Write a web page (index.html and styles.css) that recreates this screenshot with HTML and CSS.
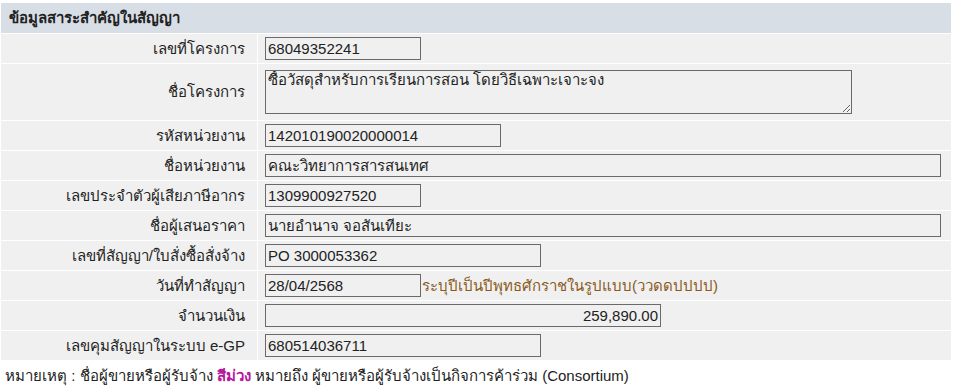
FILE: index.html
```html
<!DOCTYPE html>
<html lang="th">

<head>
    <meta charset="UTF-8">
    <meta name="viewport" content="width=device-width, initial-scale=1.0">
    <title>ข้อมูลสาระสำคัญในสัญญา</title>
    <link rel="stylesheet" href="styles.css">
</head>

<body>
    <div class="page">
        <table class="contract">
            <tr>
                <th class="section-head" colspan="2">ข้อมูลสาระสำคัญในสัญญา</th>
            </tr>
            <tr>
                <td class="label">เลขที่โครงการ</td>
                <td class="value"><input type="text" class="w-155" value="68049352241"></td>
            </tr>
            <tr class="tall">
                <td class="label">ชื่อโครงการ</td>
                <td class="value"><textarea rows="2">ซื้อวัสดุสำหรับการเรียนการสอน โดยวิธีเฉพาะเจาะจง</textarea></td>
            </tr>
            <tr>
                <td class="label">รหัสหน่วยงาน</td>
                <td class="value"><input type="text" class="w-235" value="142010190020000014"></td>
            </tr>
            <tr>
                <td class="label">ชื่อหน่วยงาน</td>
                <td class="value"><input type="text" class="w-full" value="คณะวิทยาการสารสนเทศ"></td>
            </tr>
            <tr>
                <td class="label">เลขประจำตัวผู้เสียภาษีอากร</td>
                <td class="value"><input type="text" class="w-155" value="1309900927520"></td>
            </tr>
            <tr>
                <td class="label">ชื่อผู้เสนอราคา</td>
                <td class="value"><input type="text" class="w-full" value="นายอำนาจ จอสันเทียะ"></td>
            </tr>
            <tr>
                <td class="label">เลขที่สัญญา/ใบสั่งซื้อสั่งจ้าง</td>
                <td class="value"><input type="text" class="w-275" value="PO 3000053362"></td>
            </tr>
            <tr>
                <td class="label">วันที่ทำสัญญา</td>
                <td class="value"><input type="text" class="w-155" value="28/04/2568"><span class="hint">ระบุปีเป็นปีพุทธศักราชในรูปแบบ(ววดดปปปป)</span></td>
            </tr>
            <tr>
                <td class="label">จำนวนเงิน</td>
                <td class="value"><input type="text" class="w-395 money" value="259,890.00"></td>
            </tr>
            <tr>
                <td class="label">เลขคุมสัญญาในระบบ e-GP</td>
                <td class="value"><input type="text" class="w-275" value="680514036711"></td>
            </tr>
        </table>

        <p class="note">หมายเหตุ : ชื่อผู้ขายหรือผู้รับจ้าง <b class="purple">สีม่วง</b> หมายถึง ผู้ขายหรือผู้รับจ้างเป็นกิจการค้าร่วม (Consortium)</p>
    </div>
</body>

</html>
```

FILE: styles.css
```css
* {
    box-sizing: border-box;
}

body {
    margin: 0;
    font-family: Tahoma, "Liberation Sans", "Noto Sans", sans-serif;
    font-size: 15px;
    color: #222;
    background-color: #fff;
}

.page {
    padding-top: 2px;
}

.contract {
    width: 952px;
    border-collapse: separate;
    border-spacing: 1px;
}

.section-head {
    height: 30px;
    padding: 0 8px;
    background-color: #d7dee6;
    text-align: left;
    font-weight: bold;
    color: #222;
}

.contract td {
    height: 29px;
    padding: 0;
    background-color: #f0f0f0;
    vertical-align: middle;
}

.contract tr.tall td {
    height: 56px;
}

.label {
    width: 256px;
    padding-right: 12px !important;
    text-align: right;
}

.value {
    padding-left: 7px !important;
    white-space: nowrap;
}

input,
textarea {
    font-family: inherit;
    font-size: 15px;
    color: #222;
    background-color: #f0f0f0;
    border: 1px solid #6a6a6a;
    border-radius: 0;
    margin: 0;
    vertical-align: middle;
}

input {
    height: 23px;
    padding: 0 2px;
}

textarea {
    display: block;
    width: 587px;
    height: 44px;
    padding: 0 2px;
    line-height: 18px;
}

.w-155 {
    width: 156px;
}

.w-235 {
    width: 236px;
}

.w-275 {
    width: 276px;
}

.w-395 {
    width: 396px;
}

.w-full {
    width: 676px;
}

.money {
    text-align: right;
}

.hint {
    color: #8a5a1c;
    vertical-align: middle;
    margin-left: 1px;
}

.note {
    margin: 0;
    padding: 6px 5px;
    line-height: 18px;
}

.purple {
    color: #b5189a;
}
```
